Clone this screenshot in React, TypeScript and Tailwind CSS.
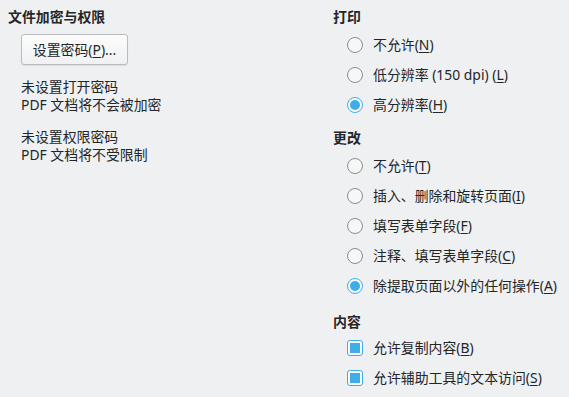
const font = { fontFamily: '"Noto Sans", "Noto Sans CJK SC", sans-serif' };

const Key = ({ k }: { k: string }) => (
  <>
    (<span className="underline underline-offset-2">{k}</span>)
  </>
);

const Radio = ({ checked, label, k, sep = "" }: { checked?: boolean; label: string; k: string; sep?: string }) => (
  <div className="flex items-center h-[30px] pl-[14px] gap-[10px]">
    {checked ? (
      <div className="w-4 h-4 rounded-full border border-[#3daee9] bg-[#fcfcfc] flex items-center justify-center">
        <div className="w-[10px] h-[10px] rounded-full bg-[#3daee9]" />
      </div>
    ) : (
      <div className="w-4 h-4 rounded-full border border-[#8a8d8f] bg-[#f7f7f7]" />
    )}
    <span>
      {label}
      {sep}
      <Key k={k} />
    </span>
  </div>
);

const Check = ({ label, k }: { label: string; k: string }) => (
  <div className="flex items-center h-[30px] pl-[14px] gap-[10px]">
    <div className="w-4 h-4 rounded-[3px] border border-[#3daee9] bg-[#fcfcfc] flex items-center justify-center">
      <div className="w-[10px] h-[10px] bg-[#3daee9]" />
    </div>
    <span>
      {label}
      <Key k={k} />
    </span>
  </div>
);

export default function App() {
  return (
    <div
      className="w-[569px] h-[397px] bg-[#eff0f1] text-[#232629] text-[13.9px] leading-[18px] flex pl-2 pt-2"
      style={font}
    >
      {/* left column */}
      <div className="w-[325px] flex flex-col">
        <div className="font-bold h-[18px]">文件加密与权限</div>
        <div className="pl-[13px] mt-2">
          <button className="h-[31px] w-[107px] rounded-[3px] border border-[#b9bbbd] bg-gradient-to-b from-[#fcfcfc] to-[#f0f1f2] shadow-[0_1px_1px_rgba(0,0,0,0.08)]">
            设置密码
            <Key k="P" />
            ...
          </button>
          <div className="mt-[13px]">
            <div>未设置打开密码</div>
            <div>PDF 文档将不会被加密</div>
          </div>
          <div className="mt-[14px]">
            <div>未设置权限密码</div>
            <div>PDF 文档将不受限制</div>
          </div>
        </div>
      </div>

      {/* right column */}
      <div className="flex-1 flex flex-col">
        <div className="font-bold h-[18px] mb-1">打印</div>
        <Radio label="不允许" k="N" />
        <Radio label="低分辨率 (150 dpi)" sep=" " k="L" />
        <Radio checked label="高分辨率" k="H" />

        <div className="font-bold h-[18px] mt-[9px] mb-1">更改</div>
        <Radio label="不允许" k="T" />
        <Radio label="插入、删除和旋转页面" k="I" />
        <Radio label="填写表单字段" k="F" />
        <Radio label="注释、填写表单字段" k="C" />
        <Radio checked label="除提取页面以外的任何操作" k="A" />

        <div className="font-bold h-[18px] mt-3 mb-0.5">内容</div>
        <Check label="允许复制内容" k="B" />
        <Check label="允许辅助工具的文本访问" k="S" />
      </div>
    </div>
  );
}
